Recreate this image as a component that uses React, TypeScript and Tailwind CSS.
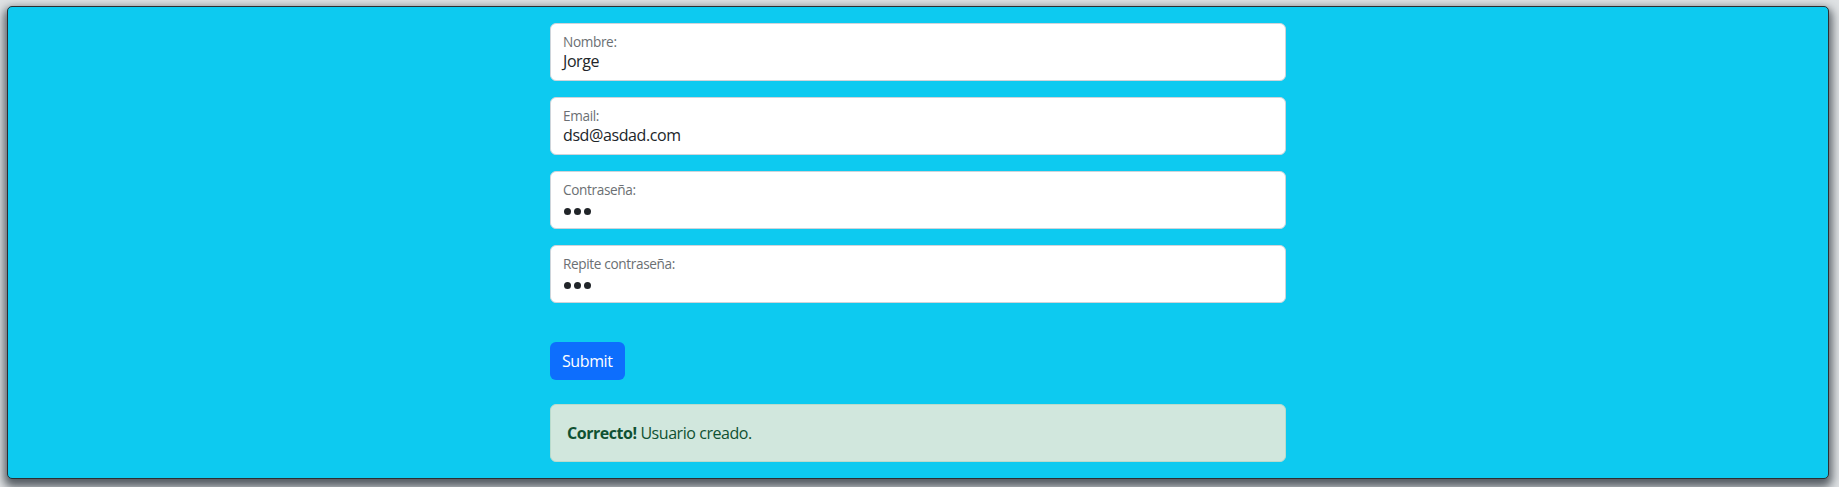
const font = { fontFamily: '"Open Sans", "Noto Sans", sans-serif' };

type FieldProps = {
  label: string;
  value?: string;
  secret?: boolean;
};

function FloatingField({ label, value, secret }: FieldProps) {
  return (
    <div className="mb-4 h-[58px] rounded-[6px] border border-[#ced4da] bg-white pl-3 pt-[9px]">
      <div className="text-[13.6px] leading-[17px] tracking-[-0.35px] text-[#6b6f73]">{label}</div>
      {secret ? (
        <div className="mt-[7px] flex h-[12px] items-center gap-[3px] pl-px">
          <span className="h-[7px] w-[7px] rounded-full bg-[#212529]" />
          <span className="h-[7px] w-[7px] rounded-full bg-[#212529]" />
          <span className="h-[7px] w-[7px] rounded-full bg-[#212529]" />
        </div>
      ) : (
        <div className="mt-px text-base leading-5 tracking-[-0.4px] text-[#212529]">{value}</div>
      )}
    </div>
  );
}

export default function App() {
  return (
    <div className="h-[487px] overflow-hidden bg-[#dfe2e4] pt-[6px] pl-[7px] pr-[10px]" style={font}>
      <div className="rounded-[5px] border border-[#2b2f33] bg-[#0dcaf0] shadow-[0_5px_10px_3px_rgba(40,48,56,0.75)]">
        <div className="mx-auto w-[736px] py-4">
          <FloatingField label="Nombre:" value="Jorge" />
          <FloatingField label="Email:" value="dsd@asdad.com" />
          <FloatingField label="Contraseña:" secret />
          <FloatingField label="Repite contraseña:" secret />

          <div className="mt-[39px]">
            <button className="h-[38px] rounded-[6px] bg-[#0d6efd] px-3 text-base leading-6 tracking-[-0.4px] text-white">
              Submit
            </button>
          </div>

          <div className="mt-6 rounded-[6px] border border-[#badbcc] bg-[#d1e7dd] px-4 py-4 text-base leading-6 tracking-[-0.45px] text-[#0f5132]">
            <strong className="font-bold">Correcto!</strong> Usuario creado.
          </div>
        </div>
      </div>
    </div>
  );
}
